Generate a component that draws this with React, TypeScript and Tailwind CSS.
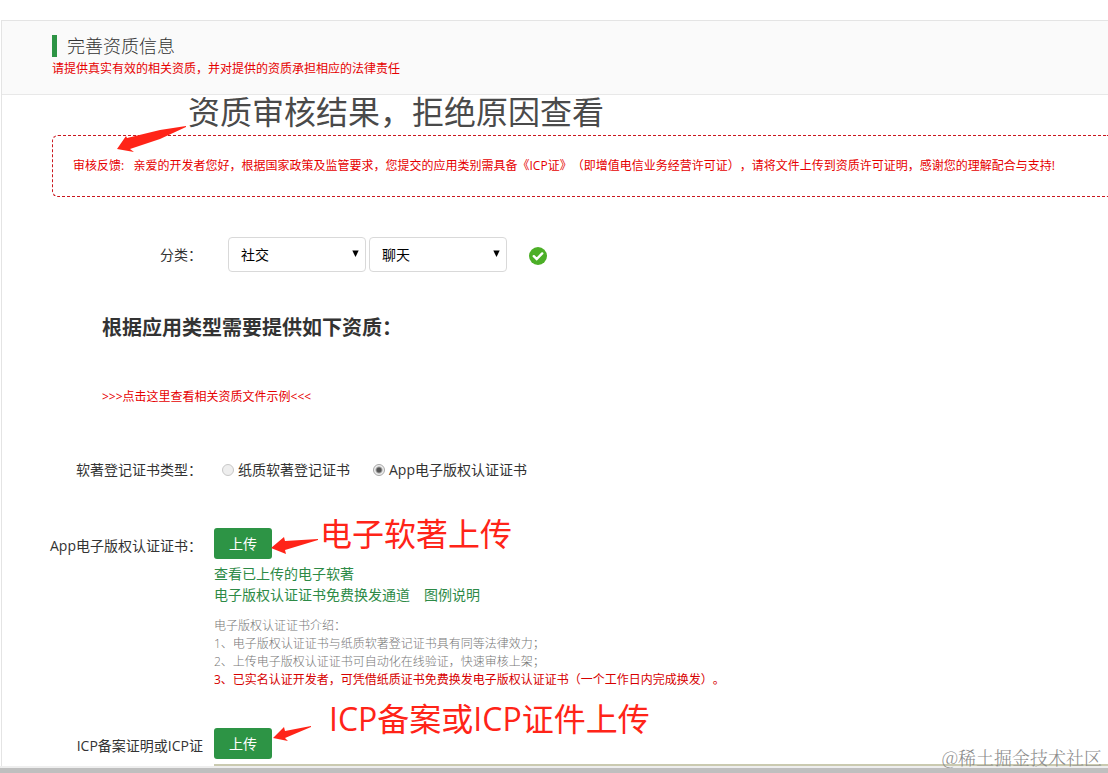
import { useState } from "react";

function Arrow({ className, points, viewBox }: { className: string; points: string; viewBox: string }) {
  return (
    <svg className={className} viewBox={viewBox} aria-hidden="true">
      <polygon points={points} fill="#ff2418" />
    </svg>
  );
}

function Dropdown({ label, options }: { label: string; options: string[] }) {
  return (
    <div className="relative">
      <select
        aria-label={label}
        className="block h-[35px] w-[138px] appearance-none rounded border border-[#d9d9d9] bg-white px-3 text-sm text-black"
      >
        {options.map((o) => (
          <option key={o}>{o}</option>
        ))}
      </select>
      <svg className="pointer-events-none absolute top-[13px] right-[7px] h-[7px] w-[7px]" viewBox="0 0 7 7" aria-hidden="true">
        <path d="M0.3 0.5H6.7L3.5 7Z" fill="#000" />
      </svg>
    </div>
  );
}

function UploadButton({ label }: { label: string }) {
  return (
    <button type="button" aria-label={label} className="block h-[31px] w-[58px] rounded-[3px] bg-[#2d9445] text-sm leading-[31px] text-white">
      上传
    </button>
  );
}

function Radio({ id, label, checked, onChange }: { id: string; label: string; checked: boolean; onChange: () => void }) {
  return (
    <div className="flex items-center gap-1">
      <input
        id={id}
        type="radio"
        name="certificate-type"
        checked={checked}
        onChange={onChange}
        className="h-3 w-3 appearance-none rounded-full border border-[#c8c8c8] bg-[#eeeeee] checked:border-[#a8a8a8] checked:bg-[radial-gradient(circle,#555_0_2px,#eeeeee_4px)]"
      />
      <label htmlFor={id}>{label}</label>
    </div>
  );
}

export default function App() {
  const [kind, setKind] = useState("app");
  return (
    <div className="flex min-h-screen flex-col overflow-hidden bg-white pt-5 font-['Open_Sans','Noto_Sans_CJK_SC',sans-serif] text-sm leading-5 text-[#333] [text-spacing-trim:space-all]">
      <main className="ml-px grow border-t border-l border-[#e4e4e4]">
        <header className="h-[74px] border-b border-[#e8e8e8] bg-[#fafafa] pt-[14px] pl-[50px]">
          <h1 className="border-l-[5px] border-[#2d9445] pl-[10px] text-lg leading-[22px] font-light">完善资质信息</h1>
          <p className="text-xs leading-6 text-[#e60000]">请提供真实有效的相关资质，并对提供的资质承担相应的法律责任</p>
        </header>

        <section className="relative mt-10 ml-[50px] rounded-l-md border border-r-0 border-dashed border-[#c9171e] py-5 pl-5">
          <p className="text-xs leading-5 whitespace-nowrap text-[#e60000]">
            审核反馈:&nbsp;&nbsp; 亲爱的开发者您好，根据国家政策及监管要求，您提交的应用类别需具备《ICP证》（即增值电信业务经营许可证），请将文件上传到资质许可证明，感谢您的理解配合与支持!
          </p>
          <p className="absolute -top-[44px] left-[135px] text-[32px] leading-10 whitespace-nowrap text-[#4a4a4a]">资质审核结果，拒绝原因查看</p>
          <Arrow className="absolute -top-[11px] left-[63px] h-[28px] w-[72px]" viewBox="0 0 72 28" points="70,1 44,5 11,13 10,11 1,24 18,27 14,24 44,14 70,2" />
        </section>

        <form onSubmit={(e) => e.preventDefault()}>
          <div className="mt-10 flex items-center">
            <span className="w-[200px] text-right">分类：</span>
            <div className="ml-[26px] flex gap-[3px]">
              <Dropdown label="分类" options={["社交"]} />
              <Dropdown label="子分类" options={["聊天"]} />
            </div>
            <svg className="mt-[3px] ml-[22px] h-[18px] w-[18px]" viewBox="0 0 18 18" aria-label="已选择">
              <circle cx="9" cy="9" r="9" fill="#4caf27" />
              <path d="M4.8 9.2L7.7 12L13.2 6.4" fill="none" stroke="#fff" strokeWidth="2.4" strokeLinecap="round" />
            </svg>
          </div>

          <h2 className="mt-[41px] ml-[100px] text-xl leading-[30px] font-bold">根据应用类型需要提供如下资质：</h2>
          <a href="#examples" className="mt-11 ml-[100px] block w-fit text-xs leading-5 text-[#e60000]">
            &gt;&gt;&gt;点击这里查看相关资质文件示例&lt;&lt;&lt;
          </a>

          <div className="mt-[53px] flex" role="radiogroup" aria-label="软著登记证书类型">
            <span className="w-[200px] text-right">软著登记证书类型：</span>
            <div className="ml-5 flex gap-[23px]">
              <Radio id="paper" label="纸质软著登记证书" checked={kind === "paper"} onChange={() => setKind("paper")} />
              <Radio id="app" label="App电子版权认证证书" checked={kind === "app"} onChange={() => setKind("app")} />
            </div>
          </div>

          <div className="mt-12 flex">
            <span className="mt-2 w-[200px] text-right">App电子版权认证证书：</span>
            <div className="ml-3">
              <div className="relative w-fit">
                <UploadButton label="上传App电子版权认证证书" />
                <Arrow className="absolute top-[8px] left-[57px] h-[20px] w-[48px]" viewBox="0 0 48 20" points="47,3 14,5 13,1 0,12 15,18 14,14 47,4" />
                <p className="absolute -top-[14px] left-[106px] text-[32px] leading-10 whitespace-nowrap text-[#ff2418]">电子软著上传</p>
              </div>
              <div className="mt-1 leading-[21px] text-[#2d8a46]">
                <a href="#uploaded" className="block w-fit">查看已上传的电子软著</a>
                <div className="flex gap-[14px]">
                  <a href="#exchange">电子版权认证证书免费换发通道</a>
                  <a href="#legend">图例说明</a>
                </div>
              </div>
              <div className="mt-3 text-xs leading-[18px] font-light text-[#777]">
                <p>电子版权认证证书介绍：</p>
                <p>1、电子版权认证证书与纸质软著登记证书具有同等法律效力；</p>
                <p>2、上传电子版权认证证书可自动化在线验证，快速审核上架；</p>
                <p className="font-normal text-[#d60000]">3、已实名认证开发者，可凭借纸质证书免费换发电子版权认证证书（一个工作日内完成换发）。</p>
              </div>
            </div>
          </div>

          <div className="mt-[39px] flex">
            <span className="mt-2 w-[201px] text-right">ICP备案证明或ICP证</span>
            <div className="relative ml-[11px] w-fit">
              <UploadButton label="上传ICP备案证明或ICP证" />
              <Arrow className="absolute -top-[3px] left-[59px] h-[18px] w-[39px]" viewBox="0 0 39 18" points="38,1 12,6 11,2 0,13 15,16 12,13 38,2" />
              <p className="absolute -top-[29px] left-[115px] text-[32px] leading-10 whitespace-nowrap text-[#ff2418]">ICP备案或ICP证件上传</p>
            </div>
          </div>
          <div className="relative mt-[5px] ml-[212px] h-[2px] bg-[#cacab0]">
            <p className="absolute right-[6px] -bottom-[3px] font-['Noto_Serif_CJK_SC','Noto_Sans_CJK_SC',sans-serif] text-lg leading-6 font-light whitespace-nowrap text-[#8c8c8c]">@稀土掘金技术社区</p>
          </div>
        </form>
      </main>
      <div className="h-[7px] border-t-2 border-[#eeeeee] bg-[#bfbfbf]" />
    </div>
  );
}
